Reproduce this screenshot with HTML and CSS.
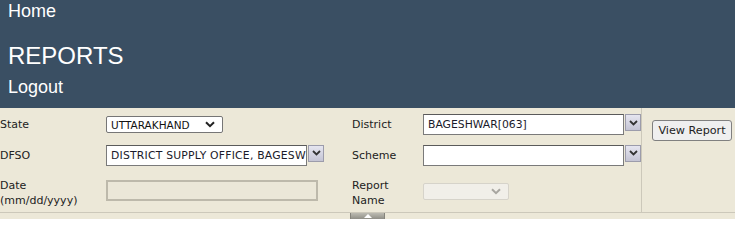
FILE: index.html
```html
<!DOCTYPE html>
<html>
<head>
<meta charset="utf-8">
<link rel="stylesheet" href="styles.css">
</head>
<body>
<div class="header">
  <div class="nav-link">Home</div>
  <div class="title">REPORTS</div>
  <div class="nav-link logout">Logout</div>
</div>
<div class="form">
  <div class="lbl r1">State</div>
  <div class="fld r1">
    <div class="select state"><span class="sel-text">UTTARAKHAND</span>
      <svg class="chev" width="10" height="7" viewBox="0 0 10 7"><path d="M1 1.2 L5 5.2 L9 1.2" fill="none" stroke="#222" stroke-width="2"/></svg>
    </div>
  </div>
  <div class="lbl r1">District</div>
  <div class="fld r1">
    <div class="combo"><div class="cinput">BAGESHWAR[063]</div><span class="cbtn"><svg width="9" height="6" viewBox="0 0 9 6"><path d="M1 1 L4.5 4.5 L8 1" fill="none" stroke="#333" stroke-width="1.8"/></svg></span></div>
  </div>
  <div class="side">
    <button class="btn">View Report</button>
  </div>

  <div class="lbl r2">DFSO</div>
  <div class="fld r2">
    <div class="combo"><div class="cinput wide">DISTRICT SUPPLY OFFICE, BAGESW</div><span class="cbtn"><svg width="9" height="6" viewBox="0 0 9 6"><path d="M1 1 L4.5 4.5 L8 1" fill="none" stroke="#333" stroke-width="1.8"/></svg></span></div>
  </div>
  <div class="lbl r2">Scheme</div>
  <div class="fld r2">
    <div class="combo"><div class="cinput"></div><span class="cbtn"><svg width="9" height="6" viewBox="0 0 9 6"><path d="M1 1 L4.5 4.5 L8 1" fill="none" stroke="#333" stroke-width="1.8"/></svg></span></div>
  </div>

  <div class="lbl r3 two">Date<br>(mm/dd/yyyy)</div>
  <div class="fld r3"><div class="date"></div></div>
  <div class="lbl r3 two">Report<br>Name</div>
  <div class="fld r3">
    <div class="select disabled"><svg class="chev" width="10" height="7" viewBox="0 0 10 7"><path d="M1 1.2 L5 5.2 L9 1.2" fill="none" stroke="#a8a6a0" stroke-width="2"/></svg></div>
  </div>
</div>
<div class="bottom">
  <div class="tab"><svg width="8" height="4" viewBox="0 0 8 4"><path d="M0 4 L4 0 L8 4 Z" fill="#fff"/></svg></div>
</div>
</body>
</html>
```

FILE: styles.css
```css
html, body {
  margin: 0;
  padding: 0;
  background: #fff;
}

body {
  font-family: "DejaVu Sans", Verdana, sans-serif;
  width: 735px;
  overflow: hidden;
}

.header {
  background: #3a4f63;
  color: #fff;
  font-family: "Liberation Sans", Arial, sans-serif;
  padding: 1px 8px 9px 8px;
  height: 108px;
  box-sizing: border-box;
}

.nav-link {
  font-size: 18px;
  line-height: 21px;
}

.title {
  font-size: 24px;
  line-height: 28px;
  margin-top: 20px;
}

.logout {
  margin-top: 7px;
}

.form {
  background: #ece8d8;
  display: grid;
  grid-template-columns: 106px 246px 71px 218px 1fr;
  grid-template-rows: 33px 28px 43px;
  height: 104px;
  margin-left: -1px;
  padding-left: 1px;
  color: #222;
}

.lbl {
  font-size: 11px;
  display: flex;
  align-items: center;
}

.lbl.two {
  line-height: 15px;
  padding-top: 4px;
}

.fld {
  display: flex;
  align-items: center;
}

.side {
  grid-column: 5;
  grid-row: 1 / span 3;
  border-left: 1px solid #ccc8ba;
  padding: 11px 0 0 10px;
}

.btn {
  font-family: "DejaVu Sans", Verdana, sans-serif;
  font-size: 11.2px;
  color: #222;
  background: #efefef;
  border: 1px solid #808080;
  border-radius: 3px;
  width: 80px;
  height: 21px;
  padding: 0;
  margin: 0;
}

.select {
  box-sizing: border-box;
  height: 17px;
  border: 1px solid #767676;
  border-radius: 2px;
  background: #fff;
  display: flex;
  align-items: center;
  justify-content: space-between;
  padding: 0 7px 0 4px;
}

.chev {
  flex: none;
}

.select.state {
  width: 117px;
  font-size: 10.5px;
  color: #111;
}

.select.disabled {
  width: 86px;
  border-color: #d6d3ca;
  background: #f1efe9;
  justify-content: flex-end;
  margin-top: 1px;
}

.combo {
  display: flex;
  align-items: flex-start;
  gap: 1px;
}

.cinput {
  box-sizing: border-box;
  width: 201px;
  height: 21px;
  background: #fff;
  border: 1px solid #7a7a7a;
  border-top-color: #5a5a5a;
  font-size: 10.8px;
  line-height: 19px;
  padding-left: 4px;
  white-space: nowrap;
  overflow: hidden;
  color: #1a1a2a;
}

.cinput.wide {
  letter-spacing: 0.22px;
}

.cbtn {
  box-sizing: border-box;
  width: 16px;
  height: 17px;
  border: 1px solid #9c9cab;
  background: linear-gradient(#e6e6f0, #c4c4d4);
  display: flex;
  align-items: center;
  justify-content: center;
}

.date {
  box-sizing: border-box;
  width: 212px;
  height: 21px;
  border: 2px solid #bdb9ab;
  background: #ebe7d8;
}

.bottom {
  background: #ece8d8;
  border-top: 1px solid #ccc8ba;
  height: 6px;
  display: flex;
  justify-content: center;
}

.tab {
  width: 35px;
  height: 6px;
  box-sizing: border-box;
  background: linear-gradient(#bcbbb2, #908f87);
  border-left: 1px solid #85847c;
  border-right: 1px solid #85847c;
  display: flex;
  align-items: flex-start;
  justify-content: center;
  padding-top: 1px;
}
```
